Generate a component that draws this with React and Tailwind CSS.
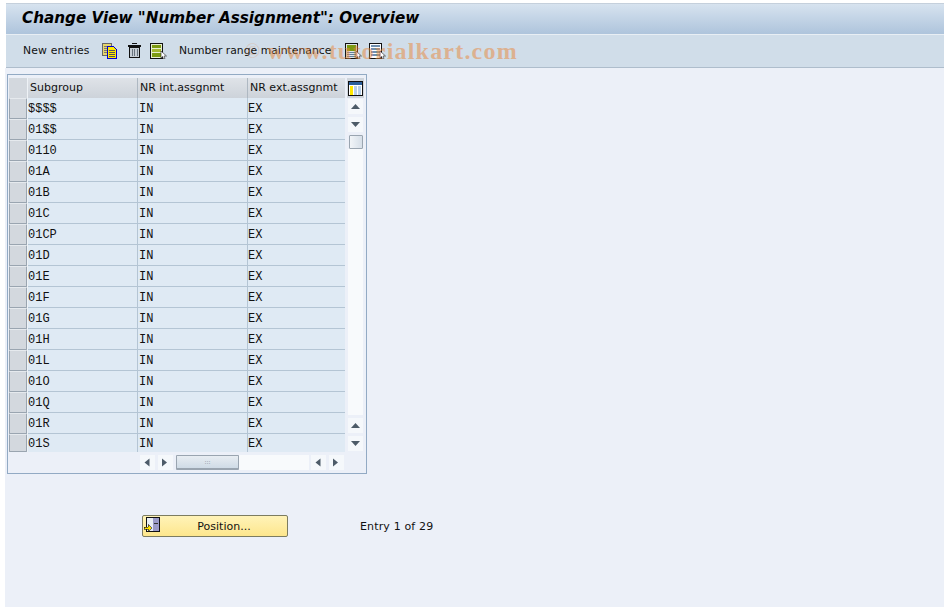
const rows = ["$$$$", "01$$", "0110", "01A", "01B", "01C", "01CP", "01D", "01E", "01F", "01G", "01H", "01L", "01O", "01Q", "01R", "01S"];

const ui = { fontFamily: '"DejaVu Sans", Verdana, sans-serif' };

const CopyIcon = () => (
  <svg width="16" height="16" viewBox="0 0 16 16" shapeRendering="crispEdges" className="block">
    <path d="M.5.5h9v12h-9z" fill="#e6d46c" stroke="#666" />
    <path d="M2 3h6M2 5h3M2 7h3M2 9h3" stroke="#777" />
    <path d="M5.500 3.500h6l3 3v9h-9z" fill="#ffe800" stroke="#0000d0" />
    <path d="M7 7h6M7 9h6M7 11h6M7 13h6" stroke="#555" />
  </svg>
);

const TrashIcon = () => (
  <svg width="13" height="16" viewBox="0 0 13 16" shapeRendering="crispEdges" className="block">
    <path d="M0 2.500h13" stroke="#111" strokeWidth="2" />
    <path d="M4 .5h5" stroke="#111" />
    <path d="M1.500 4.500h10v10h-10z" fill="#c6ced6" stroke="#111" />
    <path d="M4 6v7M6.500 6v7M9 6v7" stroke="#68737e" />
  </svg>
);

const Cursor = () => (
  <path d="M11 8l5.500 5h-2.500l1 2.500-1.500.5-1-2.500-1.500 1.500z" fill="#fff" stroke="#222" strokeWidth=".6" />
);

const ListIcon = () => (
  <svg width="17" height="16" viewBox="0 0 17 16" className="block">
    <g shapeRendering="crispEdges">
      <path d="M.5.5h12v15H.5z" fill="#e8efd0" stroke="#111" />
      <path d="M2 2h9v3H2z" fill="#7c9a10" />
      <path d="M2 6h9v3H2z" fill="#a4b830" />
      <path d="M2 10h9v4H2z" fill="#7c9a10" />
    </g>
    <Cursor />
  </svg>
);

const RangeGreenIcon = () => (
  <svg width="17" height="16" viewBox="0 0 17 16" className="block">
    <g shapeRendering="crispEdges">
      <path d="M.5.5h12v15H.5z" fill="#dfe6ea" stroke="#111" />
      <path d="M2 2h9v6H2z" fill="#7c9a10" />
      <path d="M2 9h9M2 11h9M2 13h9" stroke="#64809a" />
    </g>
    <Cursor />
  </svg>
);

const RangeBlueIcon = () => (
  <svg width="17" height="16" viewBox="0 0 17 16" className="block">
    <g shapeRendering="crispEdges">
      <path d="M.5.5h12v15H.5z" fill="#fff" stroke="#111" />
      <path d="M2 3h9M2 6h9M2 9h9M2 12h9" stroke="#7090b0" strokeWidth="2" />
    </g>
    <Cursor />
  </svg>
);

const ColumnsIcon = () => (
  <svg width="15" height="15" viewBox="0 0 15 15" shapeRendering="crispEdges" className="block">
    <path d="M.5.5h14v14H.5z" fill="#fff" stroke="#111" />
    <path d="M1 1h13v3H1z" fill="#2a5f9a" />
    <path d="M2 5h3v9H2z" fill="#ffe800" />
    <path d="M6 5h3v9H6zM10 5h3v9h-3z" fill="#b8d0e8" />
  </svg>
);

const PositionIcon = () => (
  <svg width="16" height="16" viewBox="0 0 16 16" shapeRendering="crispEdges" className="block">
    <path d="M2.500.5h13v14h-13z" fill="#9a9ac8" stroke="#111" />
    <path d="M3 1h6v13H3z" fill="#e8eef4" />
    <path d="M10 6h4" stroke="#333" />
    <path d="M0 10h4V7.500L8 11l-4 3.500V12H0z" fill="#ffe000" stroke="#111" strokeWidth=".6" />
  </svg>
);

const arrowPoints = {
  up: "1,8 10,8 5.500,3",
  down: "1,3 10,3 5.500,8",
  left: "7.500,1.500 7.500,9.500 2.500,5.500",
  right: "2,1.500 2,9.500 7,5.500",
};

const ScrollButton = ({ dir, className = "" }) => (
  <div className={"flex h-[15px] w-[15px] items-center justify-center bg-[#f5f8fb] " + className}>
    <svg width="11" height="11" viewBox="0 0 11 11" className="block">
      <polygon points={arrowPoints[dir]} fill="#4d5b68" />
    </svg>
  </div>
);

const headCell = "flex items-center bg-gradient-to-b from-[#dfe3e8] to-[#cdd3da] pt-[1px]";

export default function App() {
  return (
    <div className="relative h-[607px] w-[944px] overflow-hidden bg-white pt-[3px] text-[#111]" style={ui}>
      <div className="ml-[6px] flex h-[31px] items-center border-t border-[#c5d0dc] bg-gradient-to-b from-[#d7e3ef] to-[#aec4dc] pb-[2px] pl-[16px]">
        <h1 className="text-[15.200px] font-bold italic text-black">Change View "Number Assignment": Overview</h1>
      </div>
      <div className="ml-[6px] flex h-[34px] items-center border-y border-t-[#e8eef4] border-b-[#aebdcc] bg-[#d0dde9] pl-[17px] text-[10.800px]">
        <span className="w-[66px] whitespace-nowrap tracking-[0.200px]">New entries</span>
        <span className="ml-[13px]"><CopyIcon /></span>
        <span className="ml-[10px]"><TrashIcon /></span>
        <span className="ml-[9px]"><ListIcon /></span>
        <span className="ml-[12px] w-[151px] whitespace-nowrap">Number range maintenance</span>
        <span className="ml-[15px]"><RangeGreenIcon /></span>
        <span className="ml-[7px]"><RangeBlueIcon /></span>
      </div>

      <div className="ml-[5px] h-[539px] bg-[#ecf0f8] pl-[2px] pt-[6px]">
        <div className="h-[400px] w-[360px] border border-[#92aac4] pl-[1px] pt-[3px]">
          <div className="flex">
            <div className="w-[336px]">
              <div className="flex h-[20px] text-[11px]">
                <div className="w-[19px] border-r border-[#eef2f6] bg-[#d3d8de]" />
                <div className={headCell + " w-[110px] border-r border-[#aeb8c2] pl-[2px]"}>Subgroup</div>
                <div className={headCell + " w-[110px] border-r border-[#aeb8c2] pl-[2px]"}>NR int.assgnmt</div>
                <div className={headCell + " w-[97px] pl-[2px]"}>NR ext.assgnmt</div>
              </div>
              {rows.map((r, i) => {
                const last = i === rows.length - 1;
                const line = last ? "" : " border-b border-[#b4c5d4]";
                return (
                  <div key={r} className={"flex text-[12px] " + (last ? "h-[18px]" : "h-[21px]")} style={{ fontFamily: '"Liberation Mono", "Courier New", monospace' }}>
                    <div className="w-[18px] rounded-[1px] border border-[#9aa5b0] border-t-[#e6eaee] bg-[#d3d8de]" />
                    <div className="w-[1px] bg-[#eef2f6]" />
                    <div className={"flex w-[110px] items-center border-r border-[#b4c5d4] bg-[#dfeaf4] pt-[2px]" + line}>{r}</div>
                    <div className={"flex w-[110px] items-center border-r border-[#b4c5d4] bg-[#dfeaf4] pl-[1px] pt-[2px]" + line}>IN</div>
                    <div className={"flex w-[97px] items-center bg-[#dfeaf4] pt-[2px]" + line}>EX</div>
                  </div>
                );
              })}
            </div>
            <div className="ml-[2px] w-[17px]">
              <div className="flex h-[20px] w-[17px] items-center justify-center bg-[#cfd5dc]"><ColumnsIcon /></div>
              <div className="mt-[1px] flex flex-col items-center">
                <ScrollButton dir="up" />
                <ScrollButton dir="down" className="mt-[3px]" />
                <div className="mt-[3px] h-[14px] w-[14px] rounded-[1px] border border-[#9aa5b0] bg-gradient-to-r from-[#f2f5f8] to-[#d6dfe8]" />
                <div className="h-[266px] w-[15px] bg-[#f8fafc]" />
                <ScrollButton dir="up" className="mt-[3px]" />
                <ScrollButton dir="down" className="mt-[3px]" />
              </div>
            </div>
          </div>
          <div className="mt-[3px] flex items-center pl-[131px]">
            <ScrollButton dir="left" />
            <ScrollButton dir="right" className="ml-[3px]" />
            <div className="ml-[3px] flex h-[15px] w-[63px] items-center justify-center rounded-[1px] border border-b-2 border-[#9aa5b0] bg-gradient-to-b from-[#e8edf2] to-[#cfdbe6] text-[6px] leading-none text-[#7c8894]">:::</div>
            <div className="h-[15px] w-[70px] bg-[#f8fafc]" />
            <ScrollButton dir="left" className="ml-[2px]" />
            <ScrollButton dir="right" className="ml-[3px]" />
          </div>
        </div>

        <div className="mt-[41px] flex items-center pl-[135px] text-[11px]">
          <button className="relative flex h-[22px] w-[146px] items-center justify-center rounded-[2px] border border-[#7c7c60] bg-gradient-to-b from-[#fff3b8] to-[#fde68c] pl-[18px] pt-[3px] text-[#111]">
            <span className="absolute left-[1px] top-[1px]"><PositionIcon /></span>
            Position...
          </button>
          <span className="ml-[72px] pt-[2px] tracking-[0.150px]">Entry 1 of 29</span>
        </div>
      </div>

      <div className="pointer-events-none absolute left-[245px] top-[33px] flex items-center gap-[7px] text-[#e8873a] opacity-50" style={{ fontFamily: '"Liberation Serif", serif' }}>
        <span className="text-[20px] opacity-50">©</span>
        <span className="text-[24px] font-bold tracking-[1.200px]">www.tutorialkart.com</span>
      </div>
    </div>
  );
}
